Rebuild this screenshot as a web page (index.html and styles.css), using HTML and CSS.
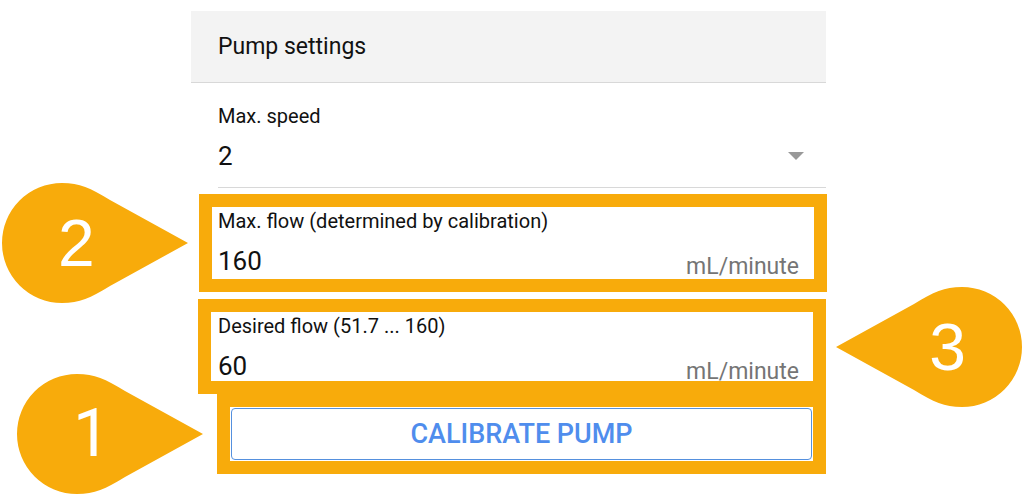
FILE: index.html
```html
<!DOCTYPE html>
<html lang="en">

<head>
    <meta charset="UTF-8">
    <meta name="viewport" content="width=device-width, initial-scale=1.0">
    <title>Pump settings</title>
    <link rel="stylesheet" href="styles.css">
</head>

<body>
    <main class="panel">
        <h2 class="panel-title">Pump settings</h2>

        <div class="field speed">
            <label for="maxSpeed">Max. speed</label>
            <div class="field-row">
                <select id="maxSpeed">
                    <option>1</option>
                    <option selected>2</option>
                    <option>3</option>
                </select>
                <svg class="caret" viewBox="0 0 16 8" aria-hidden="true"><path d="M0 0h16L8 8z"/></svg>
            </div>
        </div>

        <div class="field highlight max-flow">
            <label for="maxFlow">Max. flow (determined by calibration)</label>
            <div class="field-row">
                <input type="text" id="maxFlow" value="160">
                <span class="unit">mL/minute</span>
            </div>
            <div class="pin">
                <svg viewBox="0 0 186 120" aria-hidden="true"><path d="M186 60L108 17C88 5 78 0 60 0a60 60 0 0 0 0 120c18 0 28-5 48-17z"/></svg>
                <span class="pin-number">2</span>
            </div>
        </div>

        <div class="field highlight desired-flow">
            <label for="desiredFlow">Desired flow (51.7 ... 160)</label>
            <div class="field-row">
                <input type="text" id="desiredFlow" value="60">
                <span class="unit">mL/minute</span>
            </div>
            <div class="pin pin-right">
                <svg viewBox="0 0 186 120" aria-hidden="true"><path d="M0 60l78-43C98 5 108 0 126 0a60 60 0 0 1 0 120c-18 0-28-5-48-17z"/></svg>
                <span class="pin-number">3</span>
            </div>
        </div>

        <div class="highlight calibrate">
            <button type="button">CALIBRATE PUMP</button>
            <div class="pin">
                <svg viewBox="0 0 186 120" aria-hidden="true"><path d="M186 60L108 17C88 5 78 0 60 0a60 60 0 0 0 0 120c18 0 28-5 48-17z"/></svg>
                <span class="pin-number">1</span>
            </div>
        </div>
    </main>
</body>

</html>
```
FILE: styles.css
```css
* {
    box-sizing: border-box;
}

body {
    font-family: Roboto, sans-serif;
    background: white;
    color: #111;
    margin: 0;
    padding: 11px 198px 24px 191px;
}

.panel {
    display: flex;
    flex-direction: column;
}

.panel-title {
    margin: 0;
    padding: 20px 27px 19px;
    font-size: 23px;
    font-weight: normal;
    line-height: 32px;
    background: #f3f3f3;
    border-bottom: 1px solid #d8d8d8;
}

label {
    display: block;
    font-size: 20px;
    line-height: 24px;
    margin-bottom: 16px;
}

.field-row {
    display: flex;
    align-items: flex-end;
    justify-content: space-between;
}

input,
select {
    flex: 1;
    min-width: 0;
    height: 24px;
    margin: 0;
    padding: 0;
    border: none;
    outline: none;
    background: none;
    appearance: none;
    font-family: inherit;
    font-size: 26px;
    line-height: 24px;
    color: #111;
}

input {
    margin-bottom: 2px;
}

.speed {
    margin: 0 0 6px 27px;
    padding: 21px 22px 19px 0;
    border-bottom: 1px solid #d8d8d8;
}

.speed .field-row {
    align-items: center;
}

.caret {
    width: 16px;
    height: 8px;
    fill: #999;
}

.unit {
    font-size: 23px;
    line-height: 16px;
    color: #757575;
}

/* Orange frames around the steps */
.highlight {
    position: relative;
    border: 13px solid #f8ab0b;
}

.max-flow {
    margin: 0 -1px 7px 8px;
    padding: 2px 15px 4px 6px;
}

.desired-flow {
    margin-left: 7px;
    padding: 2px 14px 1px 7px;
}

.calibrate {
    margin-left: 26px;
    padding: 1px;
}

button {
    display: block;
    width: 100%;
    padding: 9px;
    font-family: inherit;
    font-size: 27px;
    font-weight: 500;
    line-height: 32px;
    color: #4f8ded;
    background: white;
    border: 1px solid #5590de;
    border-radius: 4px;
    cursor: pointer;
}

/* Numbered pins pointing at the frames */
.pin {
    position: absolute;
    top: 50%;
    right: calc(100% + 24px);
    width: 186px;
    height: 120px;
    display: flex;
    align-items: center;
    padding-left: 56px;
    transform: translateY(-50%);
}

.pin-right {
    right: auto;
    left: calc(100% + 23px);
    justify-content: flex-end;
    padding: 0 56px 0 0;
}

.calibrate .pin {
    right: calc(100% + 27px);
}

.pin svg {
    position: absolute;
    inset: 0;
    fill: #f8ab0b;
}

.pin-number {
    position: relative;
    font-family: "Liberation Sans", Arial, sans-serif;
    font-size: 66px;
    line-height: 72px;
    color: white;
}

/* A plain stroke without a foot */
.calibrate .pin-number {
    font-family: Roboto, sans-serif;
}
```
